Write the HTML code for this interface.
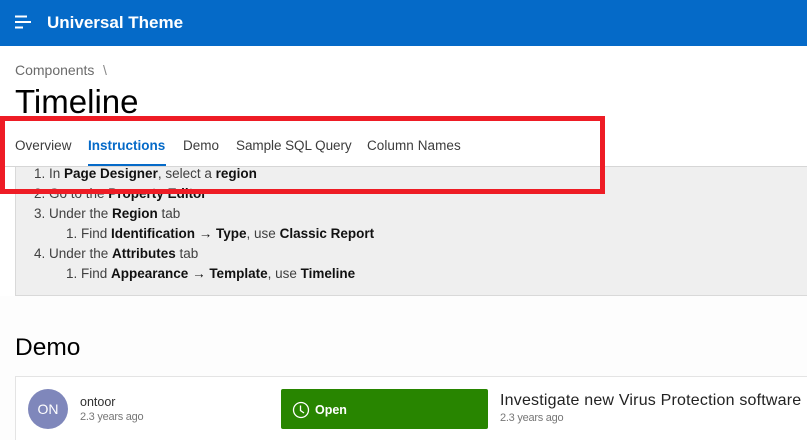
<!DOCTYPE html>
<html lang="en">
<head>
<meta charset="utf-8">
<title>Timeline</title>
<style>
html,body{margin:0;padding:0;width:807px;height:440px;overflow:hidden;background:#fff}
body{position:relative;font-family:"Liberation Sans","Noto Sans CJK JP",sans-serif;color:#262626}
.a{position:absolute;white-space:nowrap;line-height:20px}
b{font-weight:700;color:#111}
.t{font-size:13.5px;color:#3c3c3c}
.l{font-size:13.5px;color:#404040}
</style>
</head>
<body>
<div class="a" style="left:0;top:0;width:807px;height:46px;background:#056ac8"></div>
<svg class="a" style="left:15px;top:15px" width="17" height="14" viewBox="0 0 17 14"><path d="M0 1.5H12M0 7H16M0 12.5H8" stroke="#fff" stroke-width="2" fill="none"/></svg>
<div class="a" style="left:47px;top:13px;font-size:17px;font-weight:700;color:#fff">Universal Theme</div>

<div class="a" style="left:15px;top:60px;font-size:14px;color:#6b6b6b">Components</div>
<div class="a" style="left:103px;top:60px;font-size:14px;color:#8a8a8a">\</div>
<div class="a" style="left:15px;top:85px;font-size:33px;line-height:34px;color:#000">Timeline</div>

<div class="a" style="left:15px;top:166px;width:792px;height:130px;background:#efefef;border:1px solid #d9d9d9;border-right:0;box-sizing:border-box"></div>
<div class="a" style="left:0;top:166px;width:807px;height:1px;background:#d6d6d6"></div>

<div class="a t" style="left:15px;top:136px;letter-spacing:.03px">Overview</div>
<div class="a t" style="left:88px;top:136px;font-weight:700;color:#056ac8">Instructions</div>
<div class="a" style="left:88px;top:164px;width:78px;height:2px;background:#056ac8"></div>
<div class="a t" style="left:183px;top:136px">Demo</div>
<div class="a t" style="left:236px;top:136px;letter-spacing:-.06px">Sample SQL Query</div>
<div class="a t" style="left:367px;top:136px;letter-spacing:.06px">Column Names</div>

<div class="a l" style="left:34px;top:164px">1. In <b>Page Designer</b>, select a <b>region</b></div>
<div class="a l" style="left:34px;top:184px">2. Go to the <b>Property Editor</b></div>
<div class="a l" style="left:34px;top:204px">3. Under the <b>Region</b> tab</div>
<div class="a l" style="left:66px;top:224px">1. Find <b>Identification → Type</b>, use <b>Classic Report</b></div>
<div class="a l" style="left:34px;top:244px">4. Under the <b>Attributes</b> tab</div>
<div class="a l" style="left:66px;top:264px">1. Find <b>Appearance → Template</b>, use <b>Timeline</b></div>

<div class="a" style="left:0;top:296px;width:807px;height:144px;background:#fdfdfd"></div>
<div class="a" style="left:15px;top:333px;font-size:24.5px;line-height:30px;color:#000">Demo</div>

<div class="a" style="left:15px;top:376px;width:792px;height:64px;background:#fff;border:1px solid #e4e4e4;border-right:0;border-bottom:0;box-sizing:border-box"></div>
<div class="a" style="left:28px;top:389px;width:40px;height:40px;border-radius:50%;background:#7f87bb;color:#fff;font-size:14px;line-height:41px;text-align:center">ON</div>
<div class="a" style="left:80px;top:392px;font-size:12.5px;color:#303030">ontoor</div>
<div class="a" style="left:80px;top:407px;font-size:11px;color:#777;letter-spacing:-.25px">2.3 years ago</div>

<div class="a" style="left:281px;top:389px;width:207px;height:40px;background:#288500;border-radius:2px"></div>
<svg class="a" style="left:292px;top:401px" width="18" height="18" viewBox="0 0 18 18"><circle cx="9" cy="9" r="7.5" fill="none" stroke="#fff" stroke-width="1.3"/><path d="M8.5 4.5V9.5L12 12" fill="none" stroke="#fff" stroke-width="1.3"/></svg>
<div class="a" style="left:315px;top:400px;font-size:12.5px;font-weight:700;color:#fff">Open</div>

<div class="a" style="left:500px;top:391px;font-size:16px;letter-spacing:.2px;color:#222">Investigate new Virus Protection software</div>
<div class="a" style="left:500px;top:408px;font-size:11px;color:#777;letter-spacing:-.25px">2.3 years ago</div>

<div class="a" style="left:0;top:116px;width:605px;height:78px;border:5px solid #ee1c25;box-sizing:border-box"></div>
</body>
</html>
